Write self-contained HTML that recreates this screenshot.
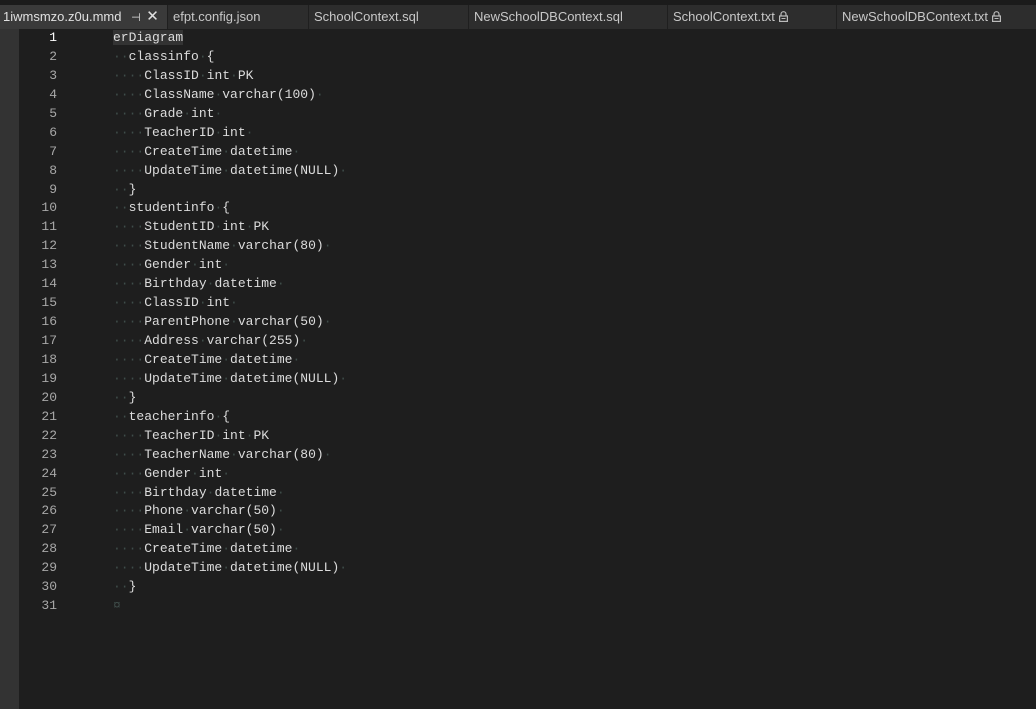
<!DOCTYPE html>
<html><head><meta charset="utf-8"><style>
html,body{margin:0;padding:0;width:1036px;height:709px;overflow:hidden;background:#1e1e1e;}
.top{position:absolute;left:0;top:0;width:1036px;height:5px;background:#1b1b1b;}
.tabs{position:absolute;left:0;top:5px;width:1036px;height:24px;background:#1f1f1f;}
.tab{position:absolute;top:0;height:24px;background:#2d2d2d;color:#c8c8c8;font:13px "Liberation Sans",sans-serif;line-height:23px;padding-left:5px;box-sizing:border-box;white-space:nowrap;}
.tab.act{background:#3a3a3a;color:#e0e0e0;padding-left:3px;}
.tab svg{vertical-align:-1px;margin-left:4px;}
.gut{position:absolute;left:0;top:29px;width:19px;height:680px;background:#333;}
.nums{position:absolute;left:19px;top:29px;width:38px;font:13px "Liberation Mono",monospace;line-height:18.93px;color:#a8a8a8;text-align:right;}
.code{position:absolute;left:113px;top:29px;font:13px "Liberation Mono",monospace;line-height:18.93px;color:#dcdcdc;white-space:pre;}
.d{color:#3f4d4a;}
.hl{background:#333;}
</style></head><body>
<div class="top"></div>
<div class="tabs">
<div class="tab act" style="left:0;width:167px">1iwmsmzo.z0u.mmd <span style="font-size:11px;margin-left:6px">⊣</span> <span style="font-size:15px;margin-left:2px">✕</span></div>
<div class="tab" style="left:168px;width:140px">efpt.config.json</div>
<div class="tab" style="left:309px;width:159px">SchoolContext.sql</div>
<div class="tab" style="left:469px;width:198px">NewSchoolDBContext.sql</div>
<div class="tab" style="left:668px;width:168px">SchoolContext.txt<svg width="9" height="11" viewBox="0 0 9 11"><path d="M2 5V3.2a2.5 2.5 0 0 1 5 0V5" fill="none" stroke="#bbb" stroke-width="1.2"/><rect x="0.6" y="5" width="7.8" height="5.4" fill="none" stroke="#bbb" stroke-width="1.2"/><rect x="2.5" y="7" width="4" height="1" fill="#bbb"/></svg></div>
<div class="tab" style="left:837px;width:199px">NewSchoolDBContext.txt<svg width="9" height="11" viewBox="0 0 9 11"><path d="M2 5V3.2a2.5 2.5 0 0 1 5 0V5" fill="none" stroke="#bbb" stroke-width="1.2"/><rect x="0.6" y="5" width="7.8" height="5.4" fill="none" stroke="#bbb" stroke-width="1.2"/><rect x="2.5" y="7" width="4" height="1" fill="#bbb"/></svg></div>
</div>
<div class="gut"></div>
<div class="nums"><span style="color:#fff">1</span><br>2<br>3<br>4<br>5<br>6<br>7<br>8<br>9<br>10<br>11<br>12<br>13<br>14<br>15<br>16<br>17<br>18<br>19<br>20<br>21<br>22<br>23<br>24<br>25<br>26<br>27<br>28<br>29<br>30<br>31</div>
<div class="code"><span class="hl">erDiagram</span>
<span class="d">··</span>classinfo<span class="d">·</span>{
<span class="d">····</span>ClassID<span class="d">·</span>int<span class="d">·</span>PK
<span class="d">····</span>ClassName<span class="d">·</span>varchar(100)<span class="d">·</span>
<span class="d">····</span>Grade<span class="d">·</span>int<span class="d">·</span>
<span class="d">····</span>TeacherID<span class="d">·</span>int<span class="d">·</span>
<span class="d">····</span>CreateTime<span class="d">·</span>datetime<span class="d">·</span>
<span class="d">····</span>UpdateTime<span class="d">·</span>datetime(NULL)<span class="d">·</span>
<span class="d">··</span>}
<span class="d">··</span>studentinfo<span class="d">·</span>{
<span class="d">····</span>StudentID<span class="d">·</span>int<span class="d">·</span>PK
<span class="d">····</span>StudentName<span class="d">·</span>varchar(80)<span class="d">·</span>
<span class="d">····</span>Gender<span class="d">·</span>int<span class="d">·</span>
<span class="d">····</span>Birthday<span class="d">·</span>datetime<span class="d">·</span>
<span class="d">····</span>ClassID<span class="d">·</span>int<span class="d">·</span>
<span class="d">····</span>ParentPhone<span class="d">·</span>varchar(50)<span class="d">·</span>
<span class="d">····</span>Address<span class="d">·</span>varchar(255)<span class="d">·</span>
<span class="d">····</span>CreateTime<span class="d">·</span>datetime<span class="d">·</span>
<span class="d">····</span>UpdateTime<span class="d">·</span>datetime(NULL)<span class="d">·</span>
<span class="d">··</span>}
<span class="d">··</span>teacherinfo<span class="d">·</span>{
<span class="d">····</span>TeacherID<span class="d">·</span>int<span class="d">·</span>PK
<span class="d">····</span>TeacherName<span class="d">·</span>varchar(80)<span class="d">·</span>
<span class="d">····</span>Gender<span class="d">·</span>int<span class="d">·</span>
<span class="d">····</span>Birthday<span class="d">·</span>datetime<span class="d">·</span>
<span class="d">····</span>Phone<span class="d">·</span>varchar(50)<span class="d">·</span>
<span class="d">····</span>Email<span class="d">·</span>varchar(50)<span class="d">·</span>
<span class="d">····</span>CreateTime<span class="d">·</span>datetime<span class="d">·</span>
<span class="d">····</span>UpdateTime<span class="d">·</span>datetime(NULL)<span class="d">·</span>
<span class="d">··</span>}
<span class="d">¤</span></div>
</body></html>
